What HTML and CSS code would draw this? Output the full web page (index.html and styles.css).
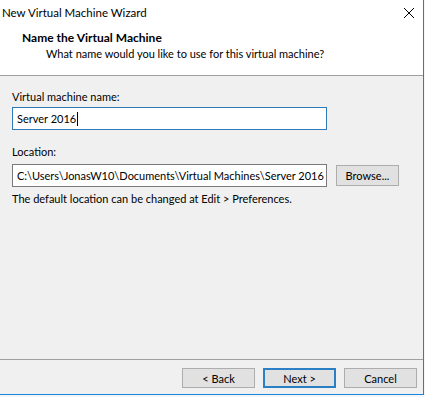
FILE: index.html
```html
<!DOCTYPE html>
<html lang="en">
<head>
    <meta charset="UTF-8">
    <meta name="viewport" content="width=device-width, initial-scale=1.0">
    <title>New Virtual Machine Wizard</title>
    <link rel="stylesheet" href="styles.css">
</head>
<body>
    <div class="window">
        <div class="titlebar">
            <span class="title">New Virtual Machine Wizard</span>
            <svg class="close" width="12" height="12" viewBox="0 0 12 12">
                <path d="M1 1 L11 11 M11 1 L1 11" stroke="#000" stroke-width="1" fill="none"/>
            </svg>
        </div>

        <div class="header">
            <div class="header-title">Name the Virtual Machine</div>
            <div class="header-sub">What name would you like to use for this virtual machine?</div>
        </div>

        <div class="content">
            <div class="label">Virtual machine name:</div>
            <div class="textbox focused">Server 2016<span class="caret"></span></div>

            <div class="label location-label">Location:</div>
            <div class="location-row">
                <div class="textbox">C:\Users\JonasW10\Documents\Virtual Machines\Server 2016</div>
                <button class="btn browse-btn">Browse...</button>
            </div>
            <div class="note">The default location can be changed at Edit &gt; Preferences.</div>
        </div>

        <div class="footer">
            <button class="btn">&lt; Back</button>
            <button class="btn default-btn">Next &gt;</button>
            <button class="btn">Cancel</button>
        </div>
    </div>
</body>
</html>
```

FILE: styles.css
```css
body {
    margin: 0;
    background-color: #f4f7fa;
    font-family: Lato, "Noto Sans", sans-serif;
    font-size: 11px;
    color: #000;
}
.window {
    width: 423px;
    height: 394px;
    display: flex;
    flex-direction: column;
    background-color: #f0f0f0;
    border-right: 1px solid #1a82d8;
    border-bottom: 1px solid #1a82d8;
}
.titlebar {
    height: 25px;
    display: flex;
    align-items: center;
    justify-content: space-between;
    padding: 0 8px 0 2px;
    font-size: 11.5px;
    background-color: #fff;
}
.close {
    display: block;
}
.header {
    height: 51px;
    padding: 5px 0 0 22px;
    box-sizing: border-box;
    background-color: #fff;
    border-bottom: 1px solid #a0a0a0;
    line-height: 16px;
}
.header-title {
    font-size: 12px;
    font-weight: bold;
}
.header-sub {
    padding-left: 24px;
}
.content {
    flex: 1;
    padding: 13px 0 0 12px;
    line-height: 16px;
}
.textbox {
    flex-shrink: 0;
    width: 315px;
    height: 23px;
    box-sizing: border-box;
    margin-top: 2px;
    padding: 0 4px;
    display: flex;
    align-items: center;
    overflow: hidden;
    background-color: #fff;
    border: 1px solid #7a7a7a;
    white-space: nowrap;
}
.textbox.focused {
    border-color: #2f7ab8;
}
.caret {
    display: inline-block;
    width: 1px;
    height: 14px;
    margin-left: 1px;
    background-color: #000;
}
.location-label {
    margin-top: 14px;
}
.location-row {
    display: flex;
    align-items: center;
    gap: 9px;
    margin-top: 2px;
}
.note {
    margin-top: 4px;
}
.btn {
    flex-shrink: 0;
    height: 20px;
    width: 73px;
    padding: 0;
    font-family: inherit;
    font-size: 11px;
    color: #000;
    background-color: #e1e1e1;
    border: 1px solid #adadad;
}
.browse-btn {
    width: 63px;
    height: 21px;
    margin-top: 2px;
}
.default-btn {
    border: 2px solid #2b7fc4;
}
.footer {
    height: 35px;
    box-sizing: border-box;
    border-top: 1px solid #a0a0a0;
    display: flex;
    justify-content: flex-end;
    align-items: flex-start;
    gap: 8px;
    padding: 8px 6px 0 0;
}
```
